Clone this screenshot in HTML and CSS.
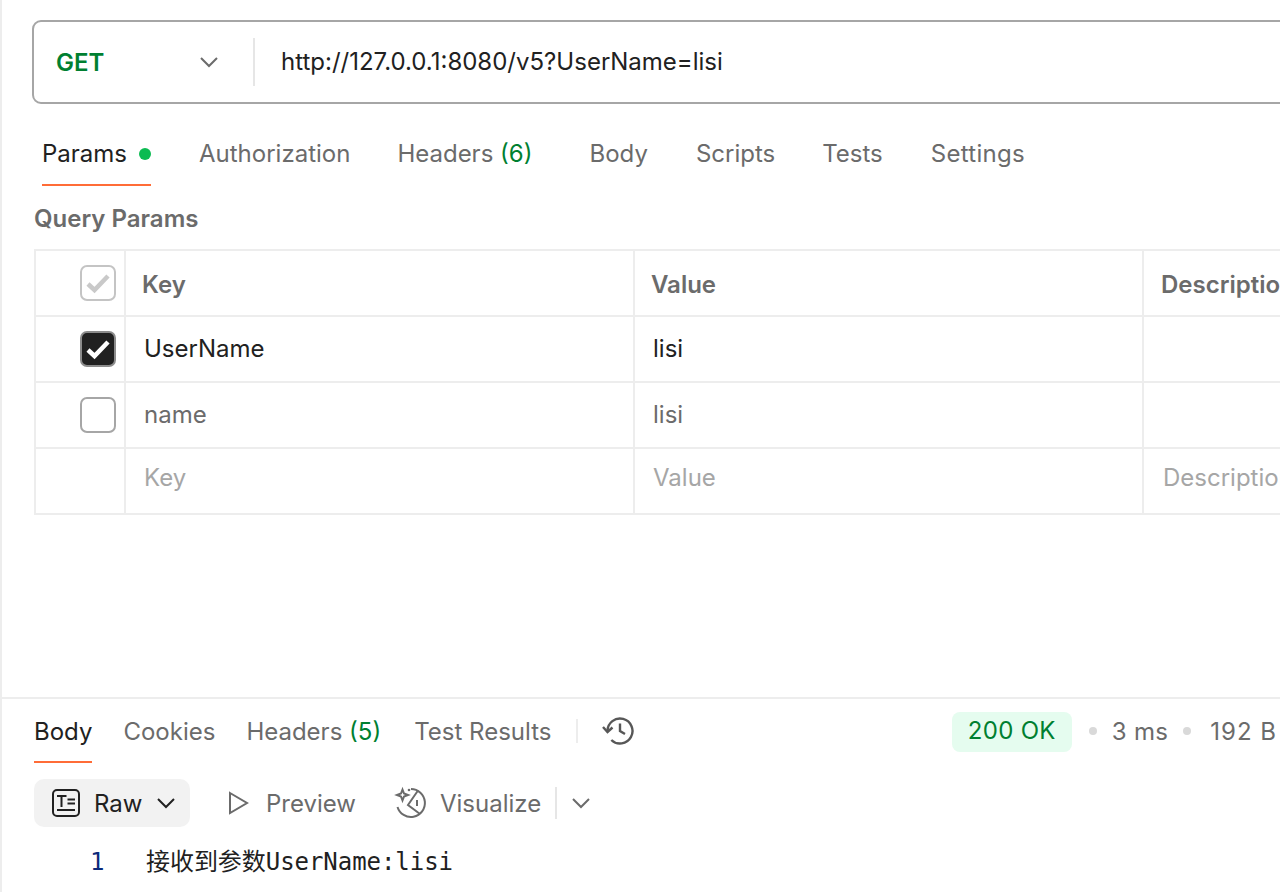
FILE: index.html
```html
<!DOCTYPE html>
<html lang="en">
<head>
<meta charset="utf-8">
<title>Postman request</title>
<link rel="stylesheet" href="styles.css">
</head>
<body>
<div class="app">
  <section class="request">
    <div class="urlbar">
      <div class="method"><span class="get">GET</span>
        <svg class="chev" width="20" height="12" viewBox="0 0 20 12"><path d="M2 2l8 8 8-8" /></svg>
      </div>
      <div class="vsep"></div>
      <div class="url">http://127.0.0.1:8080/v5?UserName=lisi</div>
    </div>
    <nav class="tabs">
      <div class="tab active">Params <span class="dot"></span></div>
      <div class="tab t-auth">Authorization</div>
      <div class="tab t-head">Headers <span class="count">(6)</span></div>
      <div class="tab">Body</div>
      <div class="tab t-scripts">Scripts</div>
      <div class="tab">Tests</div>
      <div class="tab t-settings">Settings</div>
    </nav>
    <div class="section-title">Query Params</div>
    <div class="table">
      <div class="row head">
        <div class="cell c0"><span class="check ghost"><svg width="26" height="22" viewBox="0 0 26 22"><path d="M3 12l6.500 6L23 4"/></svg></span></div>
        <div class="cell c1">Key</div>
        <div class="cell c2">Value</div>
        <div class="cell c3">Description</div>
      </div>
      <div class="row body-row">
        <div class="cell c0"><span class="check on"><svg width="26" height="22" viewBox="0 0 26 22"><path d="M3 12l6.500 6L23 4"/></svg></span></div>
        <div class="cell c1 ink">UserName</div>
        <div class="cell c2 ink">lisi</div>
        <div class="cell c3"></div>
      </div>
      <div class="row body-row">
        <div class="cell c0"><span class="check"></span></div>
        <div class="cell c1 muted">name</div>
        <div class="cell c2 muted">lisi</div>
        <div class="cell c3"></div>
      </div>
      <div class="row last">
        <div class="cell c0"></div>
        <div class="cell c1 hint">Key</div>
        <div class="cell c2 hint">Value</div>
        <div class="cell c3 hint">Description</div>
      </div>
    </div>
  </section>
  <section class="response">
    <div class="res-top">
      <div class="res-tabs">
        <div class="rtab active">Body</div>
        <div class="rtab r-cookies">Cookies</div>
        <div class="rtab r-head">Headers <span class="count">(5)</span></div>
        <div class="rtab r-test">Test Results</div>
        <div class="rsep"></div>
        <svg class="hist" width="34" height="32" viewBox="0 0 34 32"><path d="M6.500 16a12.500 12.500 0 1 1 3.800 9"/><path d="M2 12l4.500 5 5-4.500"/><path d="M19 8.500V16l5 3"/></svg>
      </div>
      <div class="stats">
        <span class="status">200 OK</span>
        <span class="sdot"></span>
        <span>3 ms</span>
        <span class="sdot s2"></span>
        <span class="size">192 B</span>
      </div>
    </div>
    <div class="toolbar">
      <div class="raw">
        <svg class="rawicon" width="30" height="30" viewBox="0 0 30 30"><rect x="2" y="2" width="26" height="26" rx="4"/><path d="M6 8h9.500M10.500 8v11M6 22h18M16.500 11.500H24M16.500 15.500H24"/></svg>
        <span>Raw</span>
        <svg class="chev dark" width="20" height="12" viewBox="0 0 20 12"><path d="M2 2l8 8 8-8" /></svg>
      </div>
      <div class="tool preview">
        <svg width="24" height="26" viewBox="0 0 24 26"><path d="M4 3l17 10L4 23z"/></svg>
        <span>Preview</span>
      </div>
      <div class="tool visualize">
        <svg width="34" height="34" viewBox="0 0 34 34"><path d="M17 3A14 14 0 1 1 3.500 21"/><path d="M24 4.500L14 19l12 9"/><path d="M23 14v6"/><path d="M8.500 3.500l1.500 4 4 1.500-4 1.500-1.500 4-1.500-4-4-1.500 4-1.500z"/><circle class="spark" cx="15" cy="4" r="1.300"/></svg>
        <span>Visualize</span>
      </div>
      <div class="tsep"></div>
      <svg class="chev" width="20" height="12" viewBox="0 0 20 12"><path d="M2 2l8 8 8-8" /></svg>
    </div>
    <div class="code">
      <span class="ln">1</span>
      <span class="src">接收到参数UserName:lisi</span>
    </div>
  </section>
</div>
</body>
</html>
```
FILE: styles.css
```css
* { box-sizing: border-box; }
html, body { margin: 0; padding: 0; height: 100%; overflow: hidden; background: #fff; }
body { font-family: Inter, "Noto Sans CJK SC", sans-serif; font-size: 24px; color: #6b6b6b; }
.app { width: 1280px; height: 892px; border-left: 2px solid #ededed; display: flex; flex-direction: column; overflow: hidden; }
svg { fill: none; display: block; flex: none; }

.request { height: 697px; padding: 20px 0 0 30px; flex: none; }
.urlbar { width: 1400px; height: 84px; border: 2px solid #a6a6a6; border-radius: 9px; display: flex; align-items: center; }
.method { width: 219px; padding: 0 34px 0 22px; display: flex; align-items: center; justify-content: space-between; }
.get { color: #007f31; font-weight: 600; font-size: 24px; }
.chev path { stroke: #6b6b6b; stroke-width: 2; }
.chev.dark path { stroke: #212121; }
.vsep { width: 2px; height: 48px; background: #e6e6e6; }
.url { margin-left: 26px; color: #212121; font-size: 24px; white-space: nowrap; padding-bottom: 2px; }

.tabs { display: flex; height: 83px; padding-left: 10px; }
.tab { height: 82px; padding-top: 35px; line-height: 30px; white-space: nowrap; margin-right: 48px; position: relative; }
.tab.active { color: #212121; display: flex; align-items: flex-start; }
.tab.active::after { content: ""; position: absolute; left: 0; right: 0; bottom: 0; height: 2px; background: #ff6c37; }
.dot { width: 12px; height: 12px; background: #0cbb52; border-radius: 50%; margin: 9px 0 0 12px; }
.t-auth, .t-scripts { margin-right: 47px; }
.t-head { margin-right: 57px; }
.t-settings { letter-spacing: .3px; }
.count { color: #007f31; }

.section-title { font-weight: 600; font-size: 24px; line-height: 28px; margin-top: 18px; margin-left: 2px; }

.table { width: 1400px; margin: 16px 0 0 2px; border-top: 2px solid #ededed; border-left: 2px solid #ededed; }
.row { display: flex; height: 66px; border-bottom: 2px solid #ededed; }
.cell { display: flex; align-items: center; padding-left: 18px; white-space: nowrap; border-right: 2px solid #ededed; flex: none; }
.c0 { width: 90px; padding-left: 44px; }
.c1 { width: 509px; }
.c2 { width: 509px; }
.c3 { width: 300px; padding-left: 19px; }
.head .cell { font-weight: 600; }
.head .c1, .head .c2 { padding-left: 16px; padding-top: 2px; }
.head .c3 { padding-left: 17px; padding-top: 2px; }
.body-row .c1, .body-row .c2 { padding-bottom: 2px; }
.ink { color: #212121; }
.muted { color: #6b6b6b; }
.hint { color: #a6a6a6; }
.last .c1, .last .c2, .last .c3 { padding-bottom: 8px; }

.check { width: 36px; height: 36px; border: 2px solid #a6a6a6; border-radius: 7px; display: flex; align-items: center; justify-content: center; }
.check svg path { stroke-width: 4.500; }
.check.ghost { border-color: #c4c4c4; }
.check.ghost path { stroke: #c9c9c9; }
.check.on { background: #212121; border-color: #8c8c8c; }
.check.on path { stroke: #fff; }

.response { flex: 1; border-top: 2px solid #ededed; padding-left: 32px; }
.res-top { display: flex; justify-content: space-between; height: 64px; width: 1243px; }
.res-tabs { display: flex; align-items: flex-start; }
.rtab { height: 64px; padding-top: 18px; line-height: 30px; margin-right: 31px; position: relative; white-space: nowrap; }
.r-head { margin-right: 33px; }
.r-test { margin-right: 33px; }
.rtab.active { color: #212121; }
.rtab.active::after { content: ""; position: absolute; left: 0; right: 0; bottom: 0; height: 2px; background: #ff6c37; }
.rsep { width: 2px; height: 24px; background: #ededed; margin: 20px 0 0 -8px; }
.hist { margin: 16px 0 0 23px; }
.hist path { stroke: #575757; stroke-width: 2.4; }
.stats { display: flex; align-items: center; height: 38px; margin-top: 13px; white-space: nowrap; gap: 15px; letter-spacing: .3px; }
.status { color: #007f31; background: #e5fcef; border-radius: 8px; height: 40px; line-height: 38px; margin: 2px 2px 0 0; width: 120px; text-align: center; }
.sdot { width: 8px; height: 8px; border-radius: 50%; background: #d9d9d9; }
.s2 { margin-right: 4px; }
.size { letter-spacing: 1px; }

.toolbar { display: flex; align-items: center; height: 48px; margin-top: 16px; }
.raw { width: 156px; height: 48px; background: #f2f2f2; border-radius: 10px; color: #212121; display: flex; align-items: center; padding-left: 17px; }
.rawicon { margin-right: 13px; }
.rawicon rect, .rawicon path { stroke: #212121; stroke-width: 2; }
.raw .chev { margin-left: 14px; }
.tool { display: flex; align-items: center; }
.preview { margin-left: 36px; gap: 16px; }
.preview path { stroke: #6b6b6b; stroke-width: 2; }
.visualize { margin-left: 38px; gap: 12px; }
.visualize path { stroke: #6b6b6b; stroke-width: 2; }
.spark { fill: #6b6b6b; }
.tsep { width: 2px; height: 32px; background: #e6e6e6; margin: 0 14px; }

.code { display: flex; color: #212121; margin-top: 17px; line-height: 36px; }
.ln { width: 112px; padding-left: 56px; color: #0b2a7a; font-family: "DejaVu Sans Mono", monospace; font-size: 24px; }
.src { font-family: "DejaVu Sans Mono", "Noto Sans CJK SC", monospace; font-size: 24px; letter-spacing: -.05px; white-space: nowrap; }
```
